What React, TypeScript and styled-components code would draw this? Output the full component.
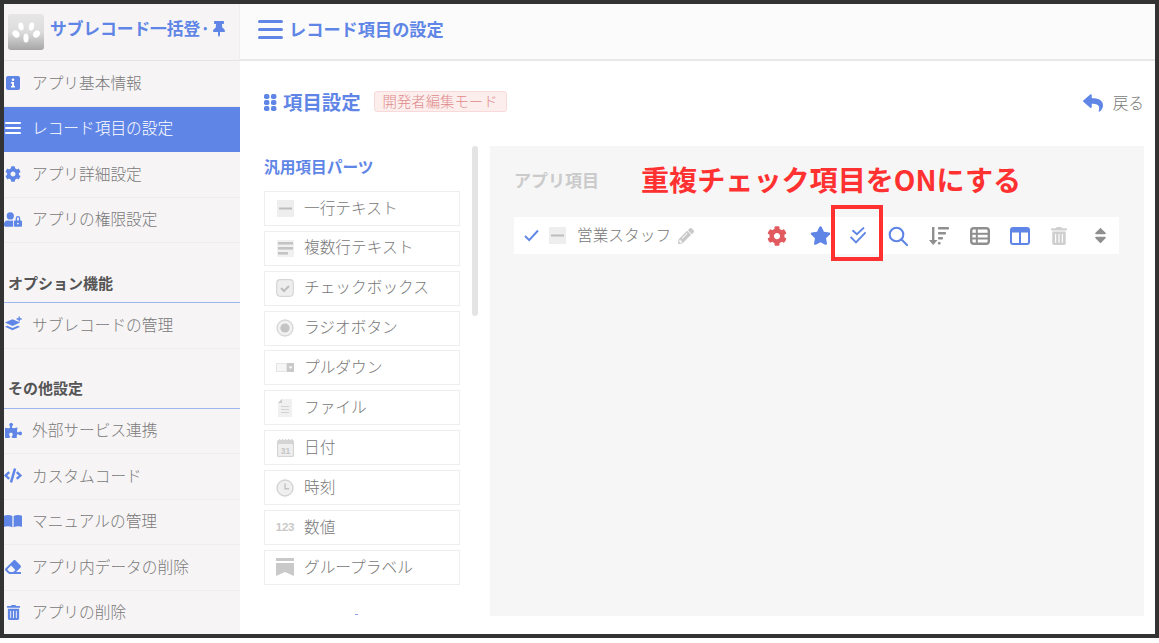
import React from "react";
import styled, { createGlobalStyle } from "styled-components";
import {
  FaCog, FaUserLock, FaPuzzlePiece, FaCode, FaEraser, FaTrashAlt,
  FaThumbtack, FaReply, FaStar, FaPencilAlt, FaSort,
} from "react-icons/fa";

const BLUE = "#5f86e6";
const FONT = `"Noto Sans CJK JP", "Noto Sans", sans-serif`;

const Global = createGlobalStyle`
  html, body { margin: 0; padding: 0; background: #fff; }
  body { font-family: ${FONT}; }
  * { box-sizing: border-box; }
`;

const Frame = styled.div`
  width: 1159px; height: 638px; border: 4px solid #333;
  display: grid; grid-template-columns: 236px 1fr; overflow: hidden; background: #fff;
`;
const Sidebar = styled.aside`
  background: #f6f4f5; height: 630px; overflow: hidden; display: flex; flex-direction: column;
`;
const Brand = styled.div`
  height: 57px; flex: none; display: flex; align-items: center; padding: 0 0 1px 4px; gap: 6px;
  border-bottom: 1px solid #e4e4e4; color: ${BLUE}; white-space: nowrap; overflow: hidden; position: relative;
  border-right: 1px solid #eee;
`;
const LogoBox = styled.div`
  width: 36px; height: 36px; border-radius: 3px; flex: none; line-height: 0;
  background: linear-gradient(#e6e6e6 0%, #dcdcdc 50%, #a6a6a6 100%);
`;
const BrandName = styled.span`
  font-size: 16.8px; font-weight: 700; letter-spacing: -0.1px; line-height: 1; padding-bottom: 7px;
`;
const BrandPin = styled.span`
  position: absolute; left: 207px; top: 17px; font-size: 16px; color: ${BLUE}; line-height: 1;
`;
const NavItem = styled.div<{ $active?: boolean }>`
  height: 45.5px; flex: none; display: flex; align-items: center;
  font-size: 15.7px; font-weight: 300; line-height: 1; white-space: nowrap;
  color: ${(p) => (p.$active ? "#fff" : "#7a7a7a")};
  background: ${(p) => (p.$active ? BLUE : "transparent")};
  border-bottom: 1px solid ${(p) => (p.$active ? BLUE : "#eeeced")};
  padding-bottom: 1px;
`;
const NavIcon = styled.span<{ $active?: boolean }>`
  width: 28px; flex: none; display: flex; justify-content: center; padding-right: 10px;
  font-size: 16px; color: ${(p) => (p.$active ? "#fff" : BLUE)}; line-height: 0;
`;
const SectionTitle = styled.div<{ $pad: number }>`
  height: 60px; flex: none; display: flex; align-items: flex-end;
  padding: 0 0 ${(p) => p.$pad}px 4px; font-size: 15px; font-weight: 700; color: #555; line-height: 1;
  border-bottom: 1px solid #9db6f0;
`;
const Main = styled.main`
  display: flex; flex-direction: column; min-width: 0;
`;
const TopBar = styled.header`
  height: 57px; flex: none; background: #fbfbfb; border-bottom: 2px solid #e8e8e8;
  display: flex; align-items: center; padding: 0 0 6px 18px; gap: 6px;
`;
const TopBarIcon = styled.span`
  color: ${BLUE}; line-height: 0; margin-top: 2px;
`;
const TopBarTitle = styled.h1`
  margin: 0; font-size: 17.2px; font-weight: 700; color: ${BLUE}; line-height: 1;
`;
const Content = styled.div`
  flex: 1; padding: 30px 11px 0 24px; display: flex; flex-direction: column;
`;
const TitleRow = styled.div`
  height: 24px; flex: none; display: flex; align-items: center;
`;
const PageTitle = styled.h2`
  margin: -2px 13px 0 0; display: flex; align-items: center; gap: 6px;
  font-size: 19.4px; font-weight: 700; color: ${BLUE}; line-height: 1;
`;
const ModeBadge = styled.span`
  height: 21px; width: 133px; margin-top: -3px; display: flex; align-items: center; justify-content: center;
  background: #fdeeee; border: 1px solid #f9d9d9; border-radius: 3px;
  color: #e08a8a; font-size: 14.4px; font-weight: 300; line-height: 1; white-space: nowrap;
`;
const BackLink = styled.span`
  margin-left: auto; display: flex; align-items: center; gap: 10px;
  color: #7a7a7a; font-size: 15.7px; font-weight: 300; line-height: 1;
  svg { color: ${BLUE}; font-size: 20px; }
`;
const Workspace = styled.div`
  margin-top: 31px; display: flex; align-items: flex-start;
`;
const Palette = styled.section`
  width: 196px; flex: none; display: flex; flex-direction: column; gap: 4.9px;
`;
const PaletteTitle = styled.h3`
  margin: 0; height: 40px; padding-top: 12px; font-size: 15.7px; font-weight: 700; color: ${BLUE}; line-height: 1.2;
`;
const Part = styled.div`
  height: 35px; flex: none; border: 1px solid #eeeeee; display: flex; align-items: center;
  padding: 0 0 2px 11px; gap: 10px; background: #fff;
  font-size: 15.7px; font-weight: 300; line-height: 1; color: #777; white-space: nowrap;
`;
const PartIcon = styled.span`
  width: 18px; height: 18px; flex: none; display: flex; align-items: center; justify-content: center; margin-top: 2px;
`;
const NumberGlyph = styled.span`
  font-family: "Liberation Sans", sans-serif; font-weight: 700; font-size: 11.5px; color: #c9c9c9; letter-spacing: -0.2px;
`;
const TinyMark = styled.div`
  width: 3px; height: 1px; background: #8fa8ea; margin: 24px 0 0 91px;
`;
const ScrollThumb = styled.div`
  width: 6px; height: 170px; flex: none; border-radius: 3px; background: #e4e4e4; margin: 0 12px 0 12px;
`;
const Panel = styled.section`
  flex: 1; height: 470px; background: #f6f6f6; padding: 0 25px 0 24px; position: relative;
`;
const PanelTitle = styled.h3`
  margin: 0; height: 71px; padding-top: 24px; font-size: 17px; font-weight: 700; color: #cbcbcb; line-height: 1.2;
`;
const Annotation = styled.div`
  position: absolute; left: 151px; top: 15px; font-size: 28.1px; font-weight: 700; color: #ff3131;
  line-height: 1.3; white-space: nowrap;
`;
const FieldRow = styled.div`
  height: 37px; background: #fff; display: flex; align-items: center; position: relative;
  padding-left: 10px; color: #777;
`;
const FieldCheck = styled.span`
  width: 25px; flex: none; color: ${BLUE}; line-height: 0;
`;
const FieldName = styled.span`
  margin: 0 7px 0 11px; font-size: 15.7px; font-weight: 300; line-height: 1; padding-bottom: 2px; white-space: nowrap;
`;
const Pencil = styled.span`
  color: #c8c8c8; font-size: 16px; line-height: 0;
`;
const Tools = styled.div`
  margin-left: auto; display: flex; align-items: center;
`;
const Tool = styled.span<{ $w: number; $color: string; $size?: number }>`
  width: ${(p) => p.$w}px; display: flex; justify-content: center; line-height: 0;
  color: ${(p) => p.$color}; font-size: ${(p) => p.$size ?? 20}px;
`;
const Highlight = styled.div`
  position: absolute; left: 317px; top: -12px; width: 52px; height: 56px; border: 4px solid #ff3131;
`;

const InfoSquare = () => (
  <svg width="14" height="14" viewBox="0 0 14 14"><rect width="14" height="14" rx="2" fill="currentColor" /><circle cx="7" cy="3.7" r="1.3" fill="#fff" /><path d="M5 6h3v4h1v1.5H5V10h1V7.5H5z" fill="#fff" /></svg>
);
const Bars = ({ w, h, sw }: { w: number; h: number; sw: number }) => (
  <svg width={w} height={h} viewBox={`0 0 ${w} ${h}`}>
    {[sw / 2, h / 2, h - sw / 2].map((y) => <line key={y} x1={sw / 2} x2={w - sw / 2} y1={y} y2={y} stroke="currentColor" strokeWidth={sw} strokeLinecap="round" />)}
  </svg>
);
const Logo = () => (
  <svg width="36" height="36" viewBox="0 0 36 36" fill="#fff">
    <ellipse cx="13" cy="12.5" rx="2.6" ry="4" transform="rotate(-12 13 12.5)" />
    <ellipse cx="23.5" cy="12.5" rx="2.6" ry="4" transform="rotate(12 23.5 12.5)" />
    <ellipse cx="8" cy="20" rx="3.2" ry="3.8" transform="rotate(-40 8 20)" />
    <ellipse cx="28.5" cy="20" rx="3.2" ry="3.8" transform="rotate(40 28.5 20)" />
    <ellipse cx="18" cy="24" rx="2.6" ry="4.6" />
  </svg>
);
const Dots = () => (
  <svg width="13" height="17" viewBox="0 0 13 17" fill={BLUE}>
    {[0, 6, 12].flatMap((y) => [0, 7].map((x) => <rect key={`${x}${y}`} x={x} y={y} width="5.4" height="5" rx="1.8" />))}
  </svg>
);
const LayerPlus = () => (
  <svg width="19" height="17" viewBox="0 0 19 17" fill="currentColor">
    <path d="M1 6.5l8-3.5 8 3.5-8 3.5z" />
    <path d="M1 11l2.6-1.2L9 12.2l5.4-2.4L17 11l-8 3.6z" />
    <path d="M15.3 0h1.4v2h2v1.4h-2v2h-1.4v-2h-2V2h2z" />
  </svg>
);
const BookFlat = () => (
  <svg width="20" height="14" viewBox="0 0 20 14" fill="currentColor">
    <path d="M0 1.2C3 0 6.5 0 9.3 1.5V14C6.5 12.7 3 12.7 0 13.5z" />
    <path d="M20 1.2C17 0 13.5 0 10.7 1.5V14C13.5 12.7 17 12.7 20 13.5z" />
  </svg>
);
const ThinCheck = () => (
  <svg width="15" height="13" viewBox="0 0 15 13" fill="none" stroke="currentColor" strokeWidth="1.9"><path d="M1 7l4.2 4.2L14 1.5" /></svg>
);
const DashTile = () => (
  <svg width="17" height="17" viewBox="0 0 17 17"><rect width="17" height="17" fill="#eeeeee" /><rect x="2" y="7.5" width="13" height="2" fill="#bdbdbd" /></svg>
);
const LinesTile = () => (
  <svg width="17" height="17" viewBox="0 0 17 17"><rect width="17" height="17" fill="#f1f1f1" /><g fill="#c4c4c4"><rect x="1" y="2" width="15" height="2.6" /><rect x="1" y="7" width="15" height="2.6" /><rect x="1" y="12" width="10" height="2.6" /></g></svg>
);
const CheckTile = () => (
  <svg width="18" height="18" viewBox="0 0 18 18"><rect x=".7" y=".7" width="16.6" height="16.6" rx="3.5" fill="#eeeeee" stroke="#d6d6d6" strokeWidth="1.2" /><path d="M5 9l3 3 5-5" fill="none" stroke="#bdbdbd" strokeWidth="2" /></svg>
);
const RadioTile = () => (
  <svg width="18" height="18" viewBox="0 0 18 18"><circle cx="9" cy="9" r="8" fill="#f1f1f1" stroke="#d6d6d6" strokeWidth="1.3" /><circle cx="9" cy="9" r="4.6" fill="#c4c4c4" /></svg>
);
const SelectTile = () => (
  <svg width="18" height="9" viewBox="0 0 18 9"><rect width="18" height="9" fill="#e6e6e6" /><rect x="11" width="7" height="9" fill="#c9c9c9" /><path d="M12.6 3.4h4L14.6 6z" fill="#fff" /><rect x="1" y="1" width="9" height="7" fill="#f6f6f6" /></svg>
);
const FileTile = () => (
  <svg width="14" height="18" viewBox="0 0 14 18"><path d="M4 0h10v18H0V4z" fill="#f0f0f0" /><path d="M4 0v4H0z" fill="#c9c9c9" /><g fill="#d2d2d2"><rect x="3" y="7" width="8" height="1" /><rect x="3" y="10" width="8" height="1" /><rect x="3" y="13" width="8" height="1" /></g></svg>
);
const CalendarTile = () => (
  <svg width="17" height="18" viewBox="0 0 17 18"><rect y="1" width="17" height="17" rx="1.5" fill="#d4d4d4" /><g fill="#d4d4d4"><rect x="2" width="1.4" height="2" /><rect x="5" width="1.4" height="2" /><rect x="8" width="1.4" height="2" /><rect x="11" width="1.4" height="2" /><rect x="14" width="1.4" height="2" /></g><rect x="1.2" y="5" width="14.6" height="11.8" fill="#efefef" /><text x="8.5" y="15" textAnchor="middle" fontFamily="Liberation Sans" fontWeight="700" fontSize="8.5" fill="#c4c4c4">31</text></svg>
);
const ClockTile = () => (
  <svg width="18" height="18" viewBox="0 0 18 18"><circle cx="9" cy="9" r="8" fill="#efefef" stroke="#d2d2d2" strokeWidth="1.3" /><path d="M9 4.5V9.7h4" fill="none" stroke="#c4c4c4" strokeWidth="1.4" /></svg>
);
const LabelTile = () => (
  <svg width="18" height="18" viewBox="0 0 18 18" fill="#c9c9c9"><rect width="18" height="3" /><path d="M0 5h18v13l-9-4-9 4z" /></svg>
);
const DoubleCheck = () => (
  <svg width="20" height="18" viewBox="0 0 20 18" fill="none" stroke="currentColor" strokeWidth="1.9"><path d="M4.5 3.2l4.4 4L16 .6" /><path d="M2.6 9.8l5.4 5.6L17.6 5.4" /></svg>
);
const SearchGlyph = () => (
  <svg width="20" height="20" viewBox="0 0 20 20" fill="none" stroke="currentColor" strokeWidth="2.1" strokeLinecap="round"><circle cx="8.5" cy="8.5" r="6.8" /><path d="M13.5 13.5l5.5 5.5" /></svg>
);
const SortLines = () => (
  <svg width="22" height="20" viewBox="0 0 22 20" fill="#8f8f8f"><path d="M4 1h2.4v13H9.5l-4.3 5L1 14h3z" /><rect x="10" y="1" width="11" height="2.6" rx=".8" /><rect x="10" y="6" width="8" height="2.6" rx=".8" /><rect x="10" y="11" width="5" height="2.6" rx=".8" /><rect x="10" y="16" width="2.6" height="2.6" rx=".8" /></svg>
);
const TableIcon = () => (
  <svg width="20" height="18" viewBox="0 0 20 18"><rect x="1.2" y="1.2" width="17.6" height="15.6" rx="2.5" fill="none" stroke="#8f8f8f" strokeWidth="2.4" /><g fill="#8f8f8f"><rect x="1" y="5.8" width="18" height="2" /><rect x="1" y="10.5" width="18" height="2" /><rect x="5.8" y="1" width="2" height="16" /></g></svg>
);
const ColumnsIcon = () => (
  <svg width="20" height="18" viewBox="0 0 20 18"><rect x="1" y="1" width="18" height="16" rx="2" fill="none" stroke={BLUE} strokeWidth="2" /><rect x="1" y="1" width="18" height="4.5" fill={BLUE} /><rect x="9" y="1" width="2" height="16" fill={BLUE} /></svg>
);

type Nav = { icon: React.ReactNode; label: string; active?: boolean };
const navA: Nav[] = [
  { icon: <InfoSquare />, label: "アプリ基本情報" },
  { icon: <Bars w={16} h={12} sw={2} />, label: "レコード項目の設定", active: true },
  { icon: <FaCog />, label: "アプリ詳細設定" },
  { icon: <FaUserLock size={19} />, label: "アプリの権限設定" },
];
const navC: Nav[] = [
  { icon: <FaPuzzlePiece size={17} />, label: "外部サービス連携" },
  { icon: <FaCode size={19} />, label: "カスタムコード" },
  { icon: <BookFlat />, label: "マニュアルの管理" },
  { icon: <FaEraser />, label: "アプリ内データの削除" },
  { icon: <FaTrashAlt size={15} />, label: "アプリの削除" },
];
const parts: { icon: React.ReactNode; label: string }[] = [
  { icon: <DashTile />, label: "一行テキスト" },
  { icon: <LinesTile />, label: "複数行テキスト" },
  { icon: <CheckTile />, label: "チェックボックス" },
  { icon: <RadioTile />, label: "ラジオボタン" },
  { icon: <SelectTile />, label: "プルダウン" },
  { icon: <FileTile />, label: "ファイル" },
  { icon: <CalendarTile />, label: "日付" },
  { icon: <ClockTile />, label: "時刻" },
  { icon: <NumberGlyph>123</NumberGlyph>, label: "数値" },
  { icon: <LabelTile />, label: "グループラベル" },
];

const NavRow = ({ icon, label, active }: Nav) => (
  <NavItem $active={active}>
    <NavIcon $active={active}>{icon}</NavIcon>
    {label}
  </NavItem>
);

export default function App() {
  return (
    <Frame>
      <Global />
      <Sidebar>
        <Brand>
          <LogoBox><Logo /></LogoBox>
          <BrandName>サブレコード一括登·</BrandName>
          <BrandPin><FaThumbtack /></BrandPin>
        </Brand>
        {navA.map((n) => <NavRow key={n.label} {...n} />)}
        <SectionTitle $pad={12}>オプション機能</SectionTitle>
        <NavRow icon={<LayerPlus />} label="サブレコードの管理" />
        <SectionTitle $pad={13}>その他設定</SectionTitle>
        {navC.map((n) => <NavRow key={n.label} {...n} />)}
      </Sidebar>
      <Main>
        <TopBar>
          <TopBarIcon><Bars w={25} h={19} sw={3} /></TopBarIcon>
          <TopBarTitle>レコード項目の設定</TopBarTitle>
        </TopBar>
        <Content>
          <TitleRow>
            <PageTitle><Dots />項目設定</PageTitle>
            <ModeBadge>開発者編集モード</ModeBadge>
            <BackLink><FaReply />戻る</BackLink>
          </TitleRow>
          <Workspace>
            <Palette>
              <PaletteTitle>汎用項目パーツ</PaletteTitle>
              {parts.map((p) => (
                <Part key={p.label}><PartIcon>{p.icon}</PartIcon>{p.label}</Part>
              ))}
              <TinyMark />
            </Palette>
            <ScrollThumb />
            <Panel>
              <PanelTitle>アプリ項目</PanelTitle>
              <Annotation>重複チェック項目をONにする</Annotation>
              <FieldRow>
                <FieldCheck><ThinCheck /></FieldCheck>
                <DashTile />
                <FieldName>営業スタッフ</FieldName>
                <Pencil><FaPencilAlt /></Pencil>
                <Tools>
                  <Tool $w={42} $color="#e05a5f"><FaCog /></Tool>
                  <Tool $w={44} $color={BLUE} $size={21}><FaStar /></Tool>
                  <Tool $w={32} $color={BLUE}><DoubleCheck /></Tool>
                  <Tool $w={48} $color={BLUE}><SearchGlyph /></Tool>
                  <Tool $w={34} $color="#8f8f8f"><SortLines /></Tool>
                  <Tool $w={48} $color="#8f8f8f"><TableIcon /></Tool>
                  <Tool $w={32} $color={BLUE}><ColumnsIcon /></Tool>
                  <Tool $w={46} $color="#cfcfcf" $size={18}><FaTrashAlt /></Tool>
                  <Tool $w={37} $color="#8f8f8f" $size={19}><FaSort /></Tool>
                </Tools>
                <Highlight />
              </FieldRow>
            </Panel>
          </Workspace>
        </Content>
      </Main>
    </Frame>
  );
}
